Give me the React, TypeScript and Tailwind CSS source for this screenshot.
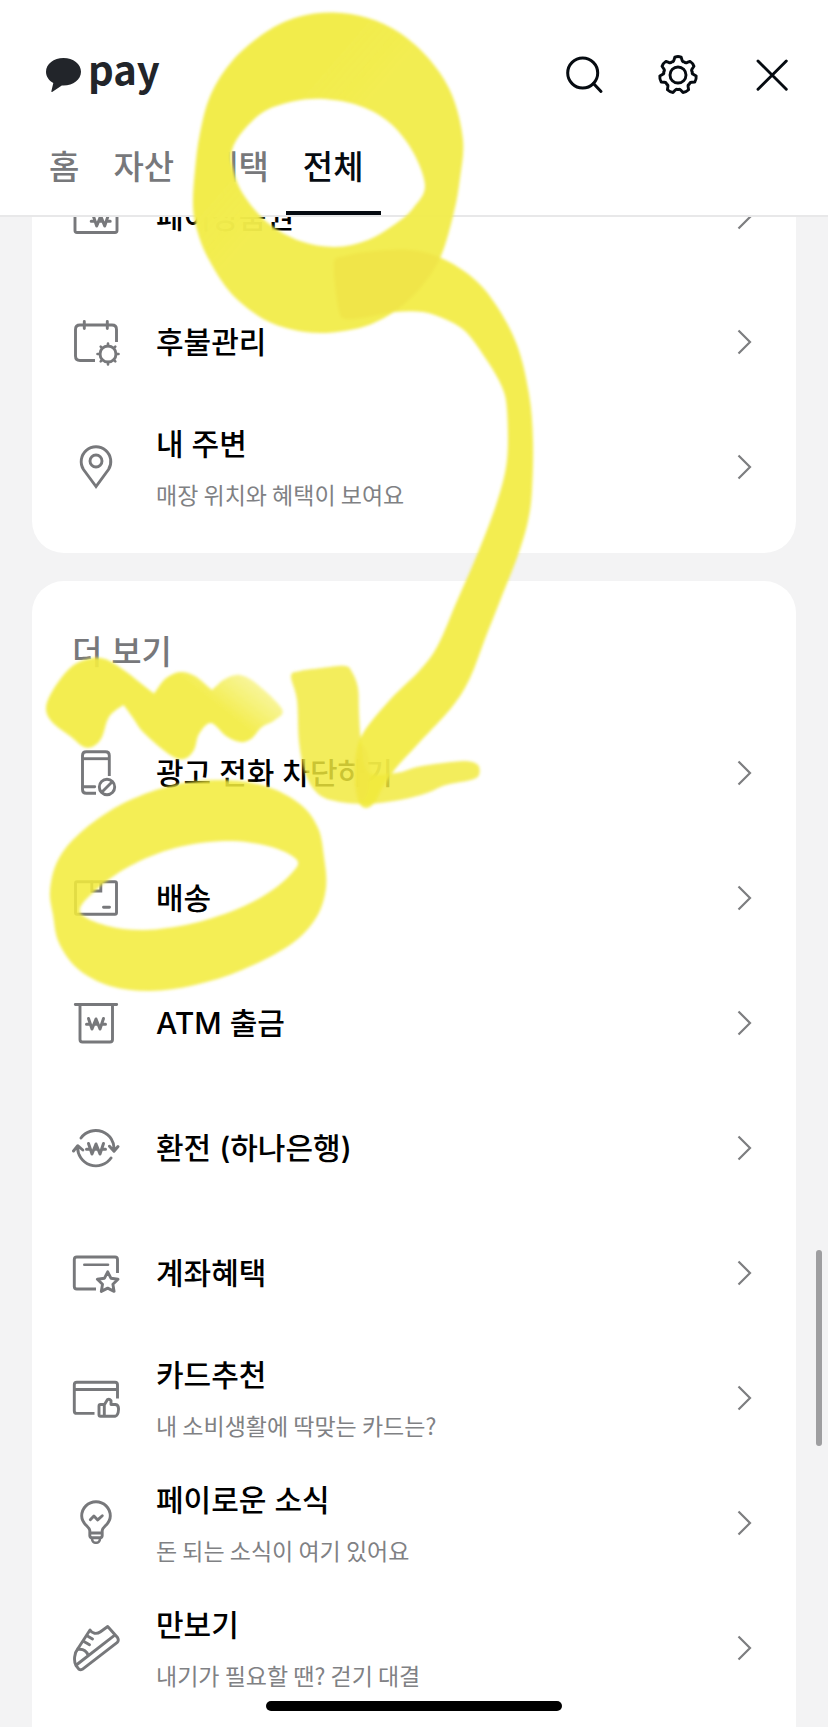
import type { ReactNode } from "react";

type Point = [number, number];

/** Closed smooth outline through the given points. */
function outline(points: Point[]): string {
  const n = points.length;
  let d = `M${points[0][0]} ${points[0][1]}`;
  for (let i = 0; i < n; i++) {
    const p0 = points[(i - 1 + n) % n];
    const p1 = points[i];
    const p2 = points[(i + 1) % n];
    const p3 = points[(i + 2) % n];
    d += `C${p1[0] + (p2[0] - p0[0]) / 6} ${p1[1] + (p2[1] - p0[1]) / 6} ${p2[0] - (p3[0] - p1[0]) / 6} ${
      p2[1] - (p3[1] - p1[1]) / 6
    } ${p2[0]} ${p2[1]}`;
  }
  return d + "Z";
}

/** Rounded cog outline with the given number of teeth, first tooth on top. */
function cog(cx: number, cy: number, teeth: number, outer: number, inner: number): string {
  const step = (Math.PI * 2) / teeth;
  const at = (a: number, r: number) =>
    `${(cx + Math.sin(a) * r).toFixed(2)} ${(cy - Math.cos(a) * r).toFixed(2)}`;
  let d = "";
  for (let i = 0; i < teeth; i++) {
    const a = i * step;
    d += `${i === 0 ? "M" : "L"}${at(a - step * 0.19, outer)}`;
    d += `Q${at(a, outer + 0.8)} ${at(a + step * 0.19, outer)}`;
    d += `L${at(a + step * 0.29, inner + 1)}`;
    d += `Q${at(a + step * 0.36, inner - 0.8)} ${at(a + step * 0.5, inner)}`;
    d += `Q${at(a + step * 0.64, inner - 0.8)} ${at(a + step * 0.71, inner + 1)}`;
  }
  return d + "Z";
}

function Icon({ children }: { children: ReactNode }) {
  return (
    <svg
      className="size-12 shrink-0"
      viewBox="0 0 48 48"
      fill="none"
      stroke="#77787b"
      strokeWidth="2.9"
      strokeLinecap="round"
      strokeLinejoin="round"
      aria-hidden="true"
    >
      {children}
    </svg>
  );
}

function Won({ x = 24, y = 25 }: { x?: number; y?: number }) {
  return (
    <path
      transform={`translate(${x} ${y})`}
      d="M-7.500-5.500 -4 5 0-5 4 5 7.500-5.500M-9.500 .3H-6M-2.200.3H2.200M6 .3H9.500"
      strokeWidth="3"
    />
  );
}

const voucherIcon = (
  <Icon>
    <rect x="3" y="7" width="42" height="32.5" rx="2" />
    <Won x={28.7} y={28} />
  </Icon>
);
const calendarIcon = (
  <Icon>
    <path strokeLinecap="butt" d="M44.5 24V11.500Q44.500 7 40 7H8Q3.500 7 3.500 11.500V38Q3.500 42.500 8 42.500H23" />
    <path d="M12.300 3.500V10.500M35.300 3.500V10.500" />
    <circle cx="36" cy="36" r="8" />
    <path
      strokeWidth="2.6"
      d="M36 28V25.500M36 44V46.500M28 36H25.500M44 36H46.500M30.300 30.300 28.700 28.700M41.700 30.300 43.300 28.700M30.300 41.700 28.700 43.300M41.700 41.700 43.300 43.300"
    />
  </Icon>
);
const pinIcon = (
  <Icon>
    <path strokeLinejoin="miter" d="M24 43.500 11.500 26.500A14.800 14.800 0 1 1 36.500 26.500Z" />
    <circle cx="24" cy="18" r="6" />
  </Icon>
);
const phoneIcon = (
  <Icon>
    <path strokeLinecap="butt" d="M37.300 27V6.500Q37.300 2.700 33.500 2.700H14.300Q10.500 2.700 10.500 6.500V40.500Q10.500 44.300 14.300 44.300H24" />
    <path strokeLinecap="butt" d="M10.500 9.700H37.300" />
    <path d="M11 37.700H22.700" />
    <circle cx="35" cy="38" r="7.700" />
    <path d="M30 43 40 33" />
  </Icon>
);
const boxIcon = (
  <Icon>
    <rect x="3.500" y="7.700" width="41" height="32.600" rx="1.500" />
    <path strokeLinejoin="miter" d="M19.800 8V17H28.800V8M31.500 33.300H37.500" />
  </Icon>
);
const atmIcon = (
  <Icon>
    <path d="M3.300 5.500H44.700M8 6V40.500Q8 43 10.500 43H38Q40.500 43 40.500 40.500V6" />
    <Won x={24} y={25} />
  </Icon>
);
const exchangeIcon = (
  <Icon>
    <path d="M9 14A18.300 18.300 0 0 1 42 26.500M39 34A18.300 18.300 0 0 1 5.700 22.500M37.500 22.200 42 27.300 46 22.500M1.500 27 5.700 21.700 10.800 26" />
    <Won x={24} y={25} />
  </Icon>
);
const accountIcon = (
  <Icon>
    <path strokeLinecap="butt" d="M45.500 24V10.500Q45.500 8 43 8H4.800Q2.300 8 2.300 10.500V37.500Q2.300 40 4.800 40H24" />
    <path d="M12.300 15.800H36" strokeWidth="2.600" />
    <path d="M35.700 22.800 38.900 29.200 46 30.300 40.900 35.300 42.100 42.400 35.700 39.100 29.300 42.400 30.500 35.300 25.400 30.300 32.500 29.200Z" />
  </Icon>
);
const cardIcon = (
  <Icon>
    <path strokeLinecap="butt" d="M45.500 24.500V10.700Q45.500 8.200 43 8.200H4.800Q2.300 8.200 2.300 10.700V36.900Q2.300 39.400 4.800 39.400H22.500M2.300 15.500H45.500" />
    <path d="M27 32Q27 30.500 28.500 30.500H32.500L35.500 25.500Q37.500 24.500 39 26.500V30.500H43.500Q46.800 31 46.500 35.500Q46.300 41.500 43 42.300H28.500Q27 42.300 27 40.800ZM32.300 31V42" />
  </Icon>
);
const bulbIcon = (
  <Icon>
    <path d="M17.800 34V31.500C17.300 27 9.700 25.500 9.700 17A14.300 14.300 0 0 1 38.300 17C38.300 25.500 30.700 27 30.200 31.500V34ZM17.800 34V36.500Q17.800 38.700 20 38.700H28Q30.200 38.700 30.200 36.500V34" />
    <path strokeWidth="2.400" d="M19.800 39.500Q20.500 43.500 23 43.700H25Q27.500 43.500 28.200 39.500" />
    <path d="M18.300 20.700 21.900 17 25.700 20.900 30.300 16.700" />
  </Icon>
);
const shoeIcon = (
  <Icon>
    <path d="M18 6 6 24.500C2.200 29 1.500 37 4 41.500L7 45.300Q8.500 46.300 10.300 45.300L45 18.700Q47.300 16.500 45.500 13.500L35.700 2.500 28.500 7.700C24.500 10.500 20 9.500 18 6Z" />
    <path d="M4.300 41 41.800 11.800M15 11.800 20.500 15M11.500 17.300 17.500 20.800M6 25.300Q13.500 24.300 16 31" />
  </Icon>
);

interface Item {
  title: string;
  note?: string;
  icon: ReactNode;
}

const payItems: Item[] = [
  { title: "페이상품권", icon: voucherIcon },
  { title: "후불관리", icon: calendarIcon },
  { title: "내 주변", note: "매장 위치와 혜택이 보여요", icon: pinIcon },
];

const moreItems: Item[] = [
  { title: "광고 전화 차단하기", icon: phoneIcon },
  { title: "배송", icon: boxIcon },
  { title: "ATM 출금", icon: atmIcon },
  { title: "환전 (하나은행)", icon: exchangeIcon },
  { title: "계좌혜택", icon: accountIcon },
  { title: "카드추천", note: "내 소비생활에 딱맞는 카드는?", icon: cardIcon },
  { title: "페이로운 소식", note: "돈 되는 소식이 여기 있어요", icon: bulbIcon },
  { title: "만보기", note: "내기가 필요할 땐? 걷기 대결", icon: shoeIcon },
];

const tabs = ["홈", "자산", "혜택", "전체"];

function MenuList({ items }: { items: Item[] }) {
  return (
    <ul>
      {items.map((item) => (
        <li key={item.title}>
          <a href="#" className="flex h-[125px] items-center gap-9 px-10">
            {item.icon}
            {item.note ? (
              <span className="flex flex-1 flex-col gap-2.5 pt-1">
                <span className="text-[30px] leading-10 font-medium text-black">{item.title}</span>
                <span className="font-['Noto_Sans_CJK_KR',sans-serif] text-[23px] leading-10 text-[#808184]">
                  {item.note}
                </span>
              </span>
            ) : (
              <span className="flex-1 text-[30px] leading-10 font-medium text-black">{item.title}</span>
            )}
            <svg className="h-8 w-6 shrink-0" viewBox="0 0 24 32" fill="none" stroke="#7d7e80" strokeWidth="2.2" aria-hidden="true">
              <path d="M6.500 4.500 18 16 6.500 27.500" />
            </svg>
          </a>
        </li>
      ))}
    </ul>
  );
}

const ringOuter: Point[] = [
  [193, 205], [195, 170], [200, 133], [211, 94], [233, 60], [266, 32], [298, 17], [333, 12.5], [368, 18], [400, 33],
  [430, 60], [452, 95], [463, 140], [460, 178], [454, 212], [441, 256], [422, 286], [398, 309], [366, 326], [325, 333],
  [290, 329], [260, 317], [230, 292], [208, 258], [197, 230],
];
const ringInner: Point[] = [
  [232, 150], [243, 131], [265, 111], [295, 101], [325, 99], [360, 106], [390, 123], [413, 152], [425, 186],
  [414, 207], [398, 222], [368, 240], [335, 247], [300, 241], [268, 223], [243, 194], [233, 168],
];
const arrowBody: Point[] = [
  [334, 264], [345, 256], [375, 251], [410, 250], [441, 258], [473, 278], [496, 305], [517, 345], [529, 394], [533, 440],
  [532, 490], [528, 521], [518, 555], [500, 601], [485, 639], [470, 678], [452, 707], [417, 745], [396, 768], [384, 785],
  [375, 802], [366, 808], [358, 800], [355, 770], [361, 737], [388, 702], [420, 670], [438, 645], [457, 601], [477, 555],
  [497, 502], [507, 460], [507, 410], [502, 387], [488, 362], [467, 333], [447, 320], [423, 312], [395, 312],
  [368, 317], [346, 319], [339, 310],
];
const arrowHead: Point[] = [
  [291, 676], [300, 671], [322, 668], [345, 666], [352, 672], [358, 688], [359, 712], [361, 740], [368, 772], [396, 773],
  [417, 767], [443, 763], [466, 761], [478, 765], [479, 775], [471, 780], [446, 785], [427, 793], [400, 800], [367, 804],
  [335, 801], [317, 793], [305, 773], [299, 742], [297, 700],
];
const scribble: Point[] = [
  [46, 708], [53, 690], [70, 668], [88, 659], [105, 659], [125, 671], [152, 692], [155, 692], [165, 679], [180, 672],
  [195, 676], [211, 689], [214, 688], [225, 679], [240, 675], [257, 684], [282, 709], [275, 720], [262, 727],
  [251, 739], [240, 742], [226, 736], [211, 723], [199, 734], [194, 750], [184, 759], [170, 755], [144, 733],
  [133, 718], [125, 707], [122, 706], [109, 717], [102, 737], [94, 746], [84, 747], [70, 736], [52, 722],
];
const loopOuter: Point[] = [
  [50, 890], [58, 860], [80, 833], [120, 805], [170, 786], [220, 780], [265, 786], [300, 804], [318, 828], [324, 857],
  [326, 888], [316, 918], [290, 945], [242, 970], [195, 985], [150, 991], [110, 986], [78, 969], [59, 943], [53, 915],
];
const loopInner: Point[] = [
  [80, 912], [96, 890], [130, 866], [175, 848], [225, 841], [268, 846], [297, 860], [290, 875], [268, 893],
  [235, 910], [190, 924], [145, 930], [108, 926],
];

function Highlights() {
  return (
    <svg
      className="pointer-events-none absolute top-0 left-0 h-[1040px] w-[560px]"
      viewBox="0 0 560 1040"
      aria-hidden="true"
    >
      <defs>
        <filter id="soft" x="-5%" y="-5%" width="110%" height="110%">
          <feGaussianBlur stdDeviation="1.5" />
        </filter>
        <linearGradient id="fade" gradientUnits="userSpaceOnUse" x1="238" y1="722" x2="268" y2="684">
          <stop offset="0" stopColor="#f2ec42" />
          <stop offset="1" stopColor="#f2ec42" stopOpacity="0.5" />
        </linearGradient>
        <linearGradient id="ringTone" gradientUnits="userSpaceOnUse" x1="195" y1="150" x2="270" y2="215">
          <stop offset="0.45" stopColor="#f2ec4c" />
          <stop offset="1" stopColor="#f2ec4a" stopOpacity="0.96" />
        </linearGradient>
        <clipPath id="ringArea">
          <path d={outline(ringOuter)} />
        </clipPath>
      </defs>
      <g filter="url(#soft)">
        <path d={outline(arrowBody)} fill="#f2ec46" fillOpacity="0.95" />
        <path d={outline(ringOuter) + outline(ringInner)} fillRule="evenodd" fill="url(#ringTone)" />
        <path d={outline(arrowBody)} clipPath="url(#ringArea)" fill="#f0e54a" />
        <path d={outline(arrowHead)} fill="#f1ea3d" fillOpacity="0.84" />
        <ellipse cx="362" cy="773" rx="8" ry="28" fill="#efe348" fillOpacity="0.4" />
        <path d={outline(scribble)} fill="url(#fade)" fillOpacity="0.93" />
        <path d={outline(loopOuter) + outline(loopInner)} fillRule="evenodd" fill="#f2eb3c" fillOpacity="0.87" />
      </g>
    </svg>
  );
}

export default function App() {
  return (
    <div className="relative flex min-h-screen flex-col bg-[#f3f3f4] font-['Inter','Noto_Sans_CJK_KR',sans-serif]">
      <header className="border-b-2 border-[#e8e8e9] bg-white pt-[50px]">
        <div className="flex h-[50px] items-center justify-between pr-[34px] pl-[46px]">
          <a href="#" className="flex h-full items-start gap-1.5 text-[#22252a]">
            <svg className="mt-2 h-9 w-9" viewBox="0 0 36 36" fill="currentColor" aria-hidden="true">
              <path d="M17.500 0C7.800 0 0 6 0 13.700 0 18.600 3 22.600 7.300 25L5.300 33.500Q5.500 34.300 6.500 33.700L15.800 27.400H17.500C27.200 27.400 35 21.400 35 13.700S27.200 0 17.500 0Z" />
            </svg>
            <span className="font-['Noto_Sans_CJK_KR',sans-serif] text-[40px] leading-9 font-bold">pay</span>
          </a>
          <div className="flex gap-[50px]">
            <button type="button" aria-label="검색">
              <svg className="size-11" viewBox="0 0 44 44" fill="none" stroke="#060b11" strokeWidth="3" strokeLinecap="round">
                <circle cx="20.700" cy="20" r="15" />
                <path d="M31.500 30.500 39 38.500" />
              </svg>
            </button>
            <button type="button" aria-label="설정">
              <svg className="size-11" viewBox="0 0 44 44" fill="none" stroke="#060b11" strokeWidth="2.9" strokeLinejoin="round">
                <path d={cog(22, 22, 7, 18.2, 14.6)} />
                <circle cx="22" cy="22" r="8" />
              </svg>
            </button>
            <button type="button" aria-label="닫기">
              <svg className="size-11" viewBox="0 0 44 44" fill="none" stroke="#060b11" strokeWidth="2.9" strokeLinecap="round">
                <path d="M8 8 36.300 36.300M36.300 8 8 36.300" />
              </svg>
            </button>
          </div>
        </div>
        <nav className="mt-[47px] flex pl-8">
          {tabs.map((tab) => (
            <button
              key={tab}
              type="button"
              aria-current={tab === "전체" ? "page" : undefined}
              className={
                tab === "전체"
                  ? "border-b-4 border-[#060b11] px-[17px] pb-6 text-[33px] leading-10 font-medium text-[#060b11]"
                  : "border-b-4 border-transparent px-[17px] pb-6 text-[33px] leading-10 font-medium text-[#77787b]"
              }
            >
              {tab}
            </button>
          ))}
        </nav>
      </header>

      <main className="flex flex-1 flex-col overflow-hidden px-8">
        <section className="-mt-[63px] rounded-b-[32px] bg-white pb-6">
          <MenuList items={payItems} />
        </section>
        <section className="mt-7 flex-1 rounded-t-[32px] bg-white pt-[51px] pb-4">
          <h2 className="mb-[38px] px-10 text-[33px] leading-10 font-medium text-[#77787b]">더 보기</h2>
          <MenuList items={moreItems} />
        </section>
      </main>

      <Highlights />
      <div className="absolute top-[1250px] right-1.5 h-[196px] w-1.5 rounded-full bg-[#9e9ea0]" />
      <div className="fixed bottom-4 left-1/2 h-2.5 w-[296px] -translate-x-1/2 rounded-full bg-black" />
    </div>
  );
}
